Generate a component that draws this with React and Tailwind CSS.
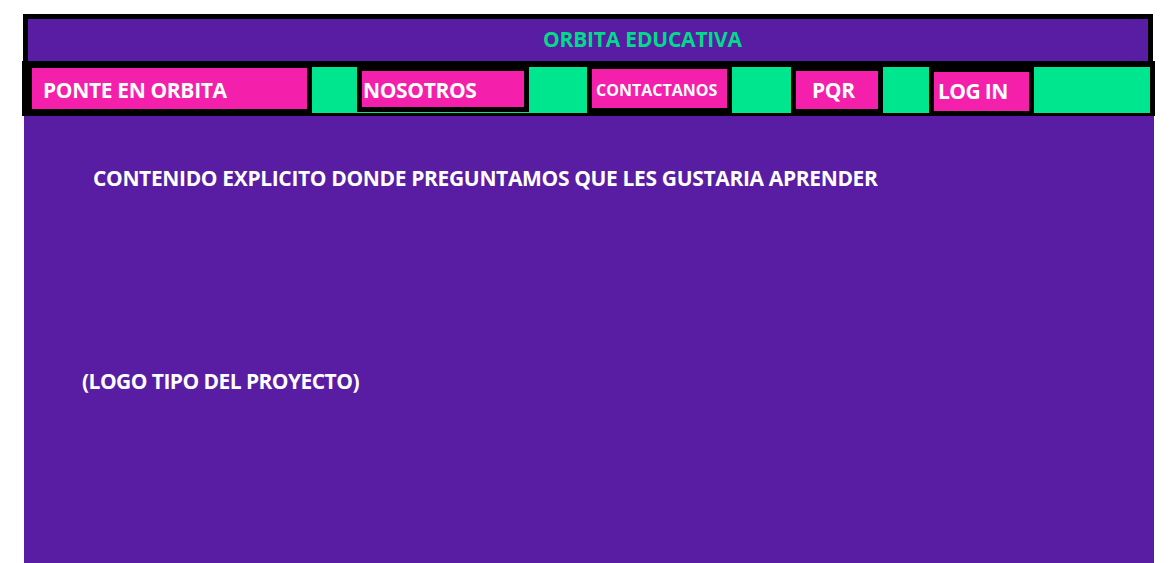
export default function App() {
  const f = { fontFamily: '"Open Sans", "Liberation Sans", sans-serif' };
  const green = "bg-[#00E68E]";
  const pink = "bg-[#F41FAA]";
  return (
    <div className="w-[1170px] h-[563px] bg-white overflow-hidden" style={f}>
      <div className="pt-[14px] pl-[23px]">
        <div className="w-[1130px] h-[47px] border-[5px] border-b-0 border-black bg-[#581DA2] flex">
          <div className="pl-[515px] pt-[10px] text-[21px] font-bold text-[#00DC8C] leading-none tracking-[-0.2px]">
            ORBITA EDUCATIVA
          </div>
        </div>
      </div>
      <div className="ml-[22px] w-[1133px] h-[55px] bg-black flex items-start pl-[10px] text-white font-bold leading-none">
        <div className={`mt-[7px] w-[275px] h-[41px] ${pink} flex items-center pl-[11px] pt-[3px] text-[21px] tracking-[-0.35px]`}>
          PONTE EN ORBITA
        </div>
        <div className={`ml-[5px] mt-[6px] w-[45px] h-[46px] ${green}`} />
        <div className="mt-[6px] w-[172px] h-[46px] border-b border-[#00E68E]">
          <div className={`ml-[5px] mt-[4px] w-[162px] h-[36px] ${pink} flex items-center pl-[1px] pt-[2px] text-[21px] tracking-[-0.35px]`}>
            NOSOTROS
          </div>
        </div>
        <div className={`mt-[6px] w-[58px] h-[46px] ${green}`} />
        <div className={`ml-[5px] mt-[8px] w-[135px] h-[39px] ${pink} flex items-center pl-[4px] pt-[3px] text-[16px]`}>
          CONTACTANOS
        </div>
        <div className={`ml-[5px] mt-[6px] w-[59px] h-[46px] ${green}`} />
        <div className={`ml-[5px] mt-[10px] w-[82px] h-[38px] ${pink} flex items-center pl-[16px] pt-[1px] text-[21px] tracking-[-0.35px]`}>
          PQR
        </div>
        <div className={`ml-[5px] mt-[6px] w-[46px] h-[46px] ${green}`} />
        <div className={`ml-[5px] mt-[11px] w-[95px] h-[39px] ${pink} flex items-center pl-[4px] text-[21px] tracking-[-0.6px]`}>
          LOG IN
        </div>
        <div className={`ml-[5px] mt-[6px] w-[116px] h-[46px] ${green}`} />
      </div>
      <div className="ml-[24px] w-[1130px] h-[447px] bg-[#581DA2] text-white font-bold leading-none flex flex-col">
        <div className="pl-[69px] pt-[52px] text-[21px] tracking-[-0.35px]">
          CONTENIDO EXPLICITO DONDE PREGUNTAMOS QUE LES GUSTARIA APRENDER
        </div>
        <div className="pl-[58px] pt-[182px] text-[21px] tracking-[-0.55px]">
          (LOGO TIPO DEL PROYECTO)
        </div>
      </div>
    </div>
  );
}
